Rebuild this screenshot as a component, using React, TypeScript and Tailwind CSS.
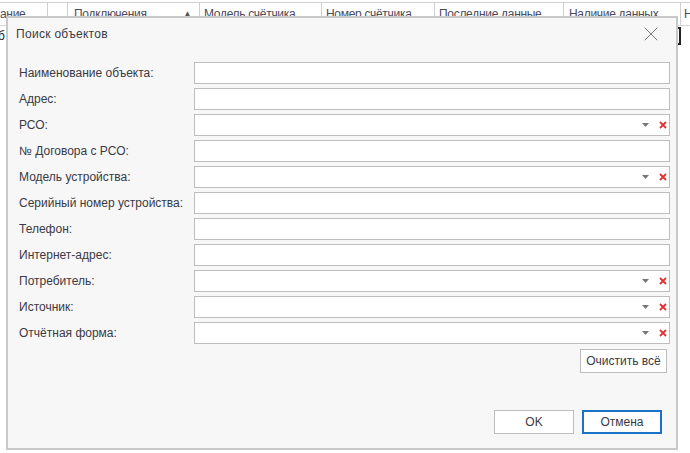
import { X } from "lucide-react";

const fields = [
  { label: "Наименование объекта:", combo: false },
  { label: "Адрес:", combo: false },
  { label: "РСО:", combo: true },
  { label: "№ Договора с РСО:", combo: false },
  { label: "Модель устройства:", combo: true },
  { label: "Серийный номер устройства:", combo: false },
  { label: "Телефон:", combo: false },
  { label: "Интернет-адрес:", combo: false },
  { label: "Потребитель:", combo: true },
  { label: "Источник:", combo: true },
  { label: "Отчётная форма:", combo: true },
];

const columns = [
  { title: "ание", w: "w-[48px]", pl: "pl-0" },
  { title: "", w: "w-[20px]", pl: "pl-0" },
  { title: "Подключения", w: "w-[132px]", pl: "pl-[6px]", sort: true },
  { title: "Модель счётчика", w: "w-[122px]", pl: "pl-[4px]" },
  { title: "Номер счётчика", w: "w-[113px]", pl: "pl-[4px]" },
  { title: "Последние данные", w: "w-[129px]", pl: "pl-[4px]" },
  { title: "Наличие данных", w: "w-[117px]", pl: "pl-[5px]" },
  { title: "Н", w: "w-[20px]", pl: "pl-[3px]" },
];

function ClearMark() {
  return (
    <svg width="8" height="8" viewBox="0 0 8 8" className="shrink-0">
      <path d="M1 1 L7 7 M7 1 L1 7" stroke="#e03030" strokeWidth="1.8" />
    </svg>
  );
}

export default function App() {
  return (
    <div
      className="relative w-[690px] h-[453px] overflow-hidden bg-white text-[12px] text-[#333]"
      style={{ fontFamily: '"Liberation Sans", Arial, sans-serif' }}
    >
      {/* grid behind the dialog */}
      <div className="border-t border-[#d0d0d0] mt-[2px]">
        <div className="flex h-[23px] border-b border-[#d6d6d6] bg-white">
          {columns.map((c, i) => (
            <div
              key={i}
              className={`${c.w} ${c.pl} shrink-0 flex items-center border-r border-[#cfcfcf] text-[#4a4a5a] tracking-[-0.3px] whitespace-nowrap overflow-hidden`}
            >
              <span className="flex-1">{c.title}</span>
              {c.sort && <span className="text-[8px] text-[#555] pr-[8px]">▲</span>}
            </div>
          ))}
        </div>
        <div className="flex h-[20px] items-center">
          <span className="text-[#222] -ml-[2px]">б</span>
          <div className="ml-auto mr-[9px] w-[30px] h-[18px] border-2 border-[#222]" />
        </div>
      </div>

      {/* dialog */}
      <div className="absolute left-[6px] top-[16px] w-[672px] h-[434px] bg-[#f7f7f7] border-2 border-[#c8c8c8] flex flex-col">
        <div className="flex items-center h-[32px] pl-[8px] pr-[13px] text-[#3a3a44]">
          <span className="flex-1 tracking-[0.3px]">Поиск объектов</span>
          <X size={24} strokeWidth={1} className="text-[#777]" />
        </div>

        <div className="flex flex-col gap-[4px] mt-[12px] pl-[11px] pr-[6px]">
          {fields.map((f) => (
            <div key={f.label} className="flex items-center h-[22px]">
              <span className="w-[175px] shrink-0 text-[#3a3a44] whitespace-nowrap">{f.label}</span>
              <div className="flex-1 h-[22px] bg-white border border-[#bdbdbd] flex items-center justify-end pr-[2px] gap-[10px]">
                {f.combo && (
                  <>
                    <svg width="7" height="4" viewBox="0 0 7 4">
                      <path d="M0 0 L7 0 L3.5 4 Z" fill="#777" />
                    </svg>
                    <ClearMark />
                  </>
                )}
              </div>
            </div>
          ))}
          <div className="flex justify-end mt-[1px] pr-[3px]">
            <button className="w-[87px] h-[24px] bg-white border border-[#bdbdbd] text-[#3a3a44]">
              Очистить всё
            </button>
          </div>
        </div>

        <div className="mt-auto mb-[14px] flex justify-end gap-[8px] pr-[14px]">
          <button className="w-[80px] h-[24px] bg-white border border-[#bdbdbd] text-[#3a3a44]">OK</button>
          <button className="w-[80px] h-[24px] bg-white border-2 border-[#1a73c8] text-[#3a3a44]">Отмена</button>
        </div>
      </div>
    </div>
  );
}
